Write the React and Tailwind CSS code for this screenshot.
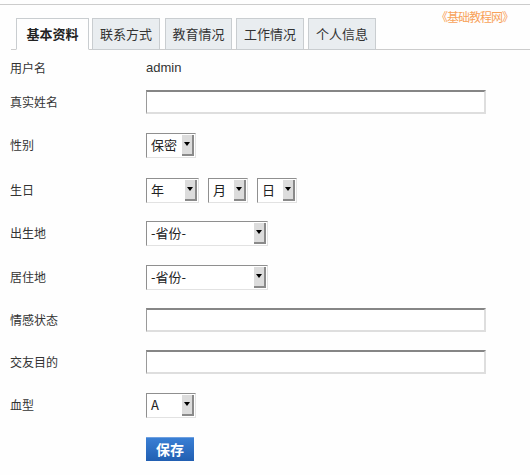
import React from "react";

const tabs = [
  { name: "基本资料", w: "w-[73px]", ml: "ml-0", active: true },
  { name: "联系方式", w: "w-[68px]", ml: "ml-[3px]" },
  { name: "教育情况", w: "w-[67px]", ml: "ml-[5px]" },
  { name: "工作情况", w: "w-[68px]", ml: "ml-[4px]" },
  { name: "个人信息", w: "w-[68px]", ml: "ml-[4px]" },
];

function FakeSelect({ value, className }) {
  return (
    <div
      className={`flex h-[25px] items-stretch border border-t-[#8f8f8f] border-l-[#8f8f8f] border-r-[#e2e2e2] border-b-[#e2e2e2] bg-white ${className}`}
    >
      <span className="flex flex-1 items-center pl-[4px] text-[13px] text-[#222]">{value}</span>
      <span className="my-[1px] mr-[1px] flex w-[12px] items-center justify-center border-r-2 border-b-2 border-r-[#8a8a8a] border-b-[#8a8a8a] bg-[#dcdcdc]">
        <span className="h-0 w-0 border-x-[3px] border-t-[4px] border-x-transparent border-t-black" />
      </span>
    </div>
  );
}

function TextBox() {
  return (
    <div className="h-[24px] w-[340px] border-2 border-t-[#868686] border-l-[#9a9a9a] border-l-[1px] border-r-[#dedede] border-b-[#dedede] bg-white" />
  );
}

function Row({ label, children, className }) {
  return (
    <div className={`flex h-[26px] items-center ${className}`}>
      <div className="w-[146px] pl-[10px]">{label}</div>
      <div className="flex items-center gap-[9px]">{children}</div>
    </div>
  );
}

export default function App() {
  return (
    <div
      className="relative h-[475px] w-[530px] overflow-hidden bg-[#fefefe] text-[12px] text-[#333]"
      style={{ fontFamily: '"Noto Sans CJK SC", "Liberation Sans", sans-serif' }}
    >
      <div className="mt-[4px] border-t border-[#cccccc]" />

      {/* watermark */}
      <div className="absolute right-[17px] top-[8px] text-[12px] tracking-[-1px] text-[#f8a25a]">《基础教程网》</div>

      {/* tabs */}
      <div className="ml-[11px] mt-[13px] flex items-end border-b border-[#cccccc] pl-[5px]">
        {tabs.map((t) => (
          <div
            key={t.name}
            className={`${t.w} ${t.ml} -mb-px flex h-[32px] items-center justify-center border border-[#c9cdd0] text-[13px] ${
              t.active
                ? "border-b-[#fefefe] bg-[#fefefe] font-bold text-[#222]"
                : "bg-[#e9edf0] text-[#333]"
            }`}
          >
            {t.name}
          </div>
        ))}
      </div>

      {/* form */}
      <div className="flex flex-col">
        <Row label="用户名" className="mt-[5px]">
          <span className="text-[13px] text-[#333]" style={{ fontFamily: '"Liberation Sans", sans-serif' }}>
            admin
          </span>
        </Row>
        <Row label="真实姓名" className="mt-[8px]">
          <TextBox />
        </Row>
        <Row label="性别" className="mt-[17px]">
          <FakeSelect value="保密" className="w-[50px]" />
        </Row>
        <Row label="生日" className="mt-[19px]">
          <FakeSelect value="年" className="w-[53px]" />
          <FakeSelect value="月" className="w-[40px]" />
          <FakeSelect value="日" className="w-[40px]" />
        </Row>
        <Row label="出生地" className="mt-[17px]">
          <FakeSelect value="-省份-" className="w-[122px]" />
        </Row>
        <Row label="居住地" className="mt-[18px]">
          <FakeSelect value="-省份-" className="w-[122px]" />
        </Row>
        <Row label="情感状态" className="mt-[17px]">
          <TextBox />
        </Row>
        <Row label="交友目的" className="mt-[16px]">
          <TextBox />
        </Row>
        <Row label="血型" className="mt-[17px]">
          <FakeSelect value="A" className="w-[50px]" />
        </Row>
        <Row label="" className="mt-[18px]">
          <button className="h-[24px] w-[48px] border-t border-t-[#6fa0e0] bg-gradient-to-b from-[#3a7fd4] to-[#215fb2] text-[14px] font-bold text-white">
            保存
          </button>
        </Row>
      </div>
    </div>
  );
}
